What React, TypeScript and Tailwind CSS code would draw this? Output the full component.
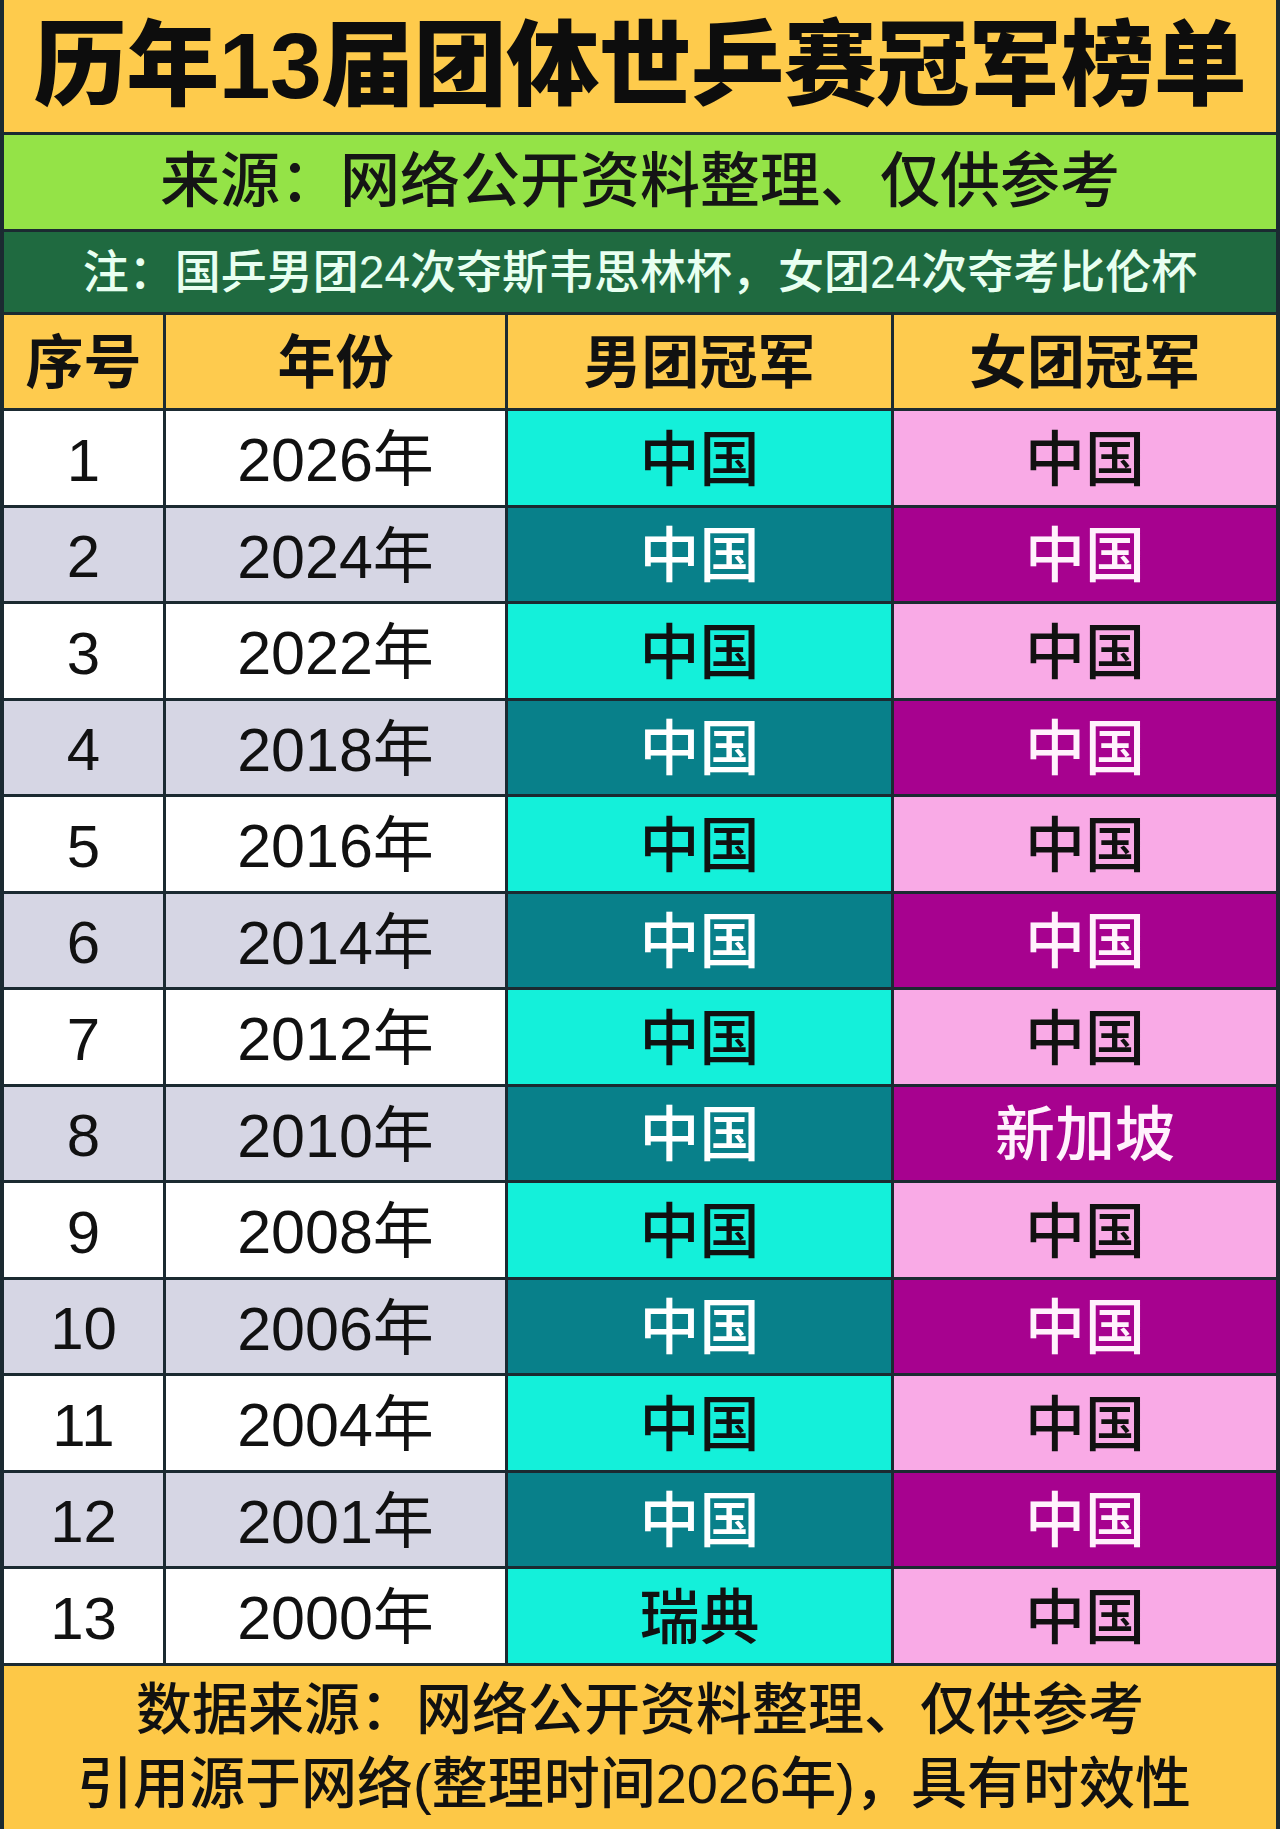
const FONT = "font-['Liberation_Sans','Noto_Sans_CJK_SC',sans-serif]"

type Row = { no: number; year: string; men: string; women: string }

const ROWS: Row[] = [
  { no: 1, year: '2026年', men: '中国', women: '中国' },
  { no: 2, year: '2024年', men: '中国', women: '中国' },
  { no: 3, year: '2022年', men: '中国', women: '中国' },
  { no: 4, year: '2018年', men: '中国', women: '中国' },
  { no: 5, year: '2016年', men: '中国', women: '中国' },
  { no: 6, year: '2014年', men: '中国', women: '中国' },
  { no: 7, year: '2012年', men: '中国', women: '中国' },
  { no: 8, year: '2010年', men: '中国', women: '新加坡' },
  { no: 9, year: '2008年', men: '中国', women: '中国' },
  { no: 10, year: '2006年', men: '中国', women: '中国' },
  { no: 11, year: '2004年', men: '中国', women: '中国' },
  { no: 12, year: '2001年', men: '中国', women: '中国' },
  { no: 13, year: '2000年', men: '瑞典', women: '中国' },
]

const COLS = 'grid grid-cols-[159px_339px_383px_382px] gap-x-[3px]'

export default function App() {
  return (
    <div
      className={`${FONT} w-[1280px] h-[1829px] bg-[#1b2a31] px-[4px] flex flex-col gap-[3px] text-[#111]`}
    >
      {/* Title */}
      <div className="h-[132px] bg-[#fecb4c] flex items-center justify-center">
        <h1 className="text-[93px] leading-none font-black tracking-[-0.5px] text-[#0d0d0d]">
          历年13届团体世乒赛冠军榜单
        </h1>
      </div>

      {/* Source */}
      <div className="h-[94px] bg-[#94e347] flex items-center justify-center">
        <p className="text-[60px] leading-none font-medium text-[#151515]">
          来源：网络公开资料整理、仅供参考
        </p>
      </div>

      {/* Note */}
      <div className="h-[80px] bg-[#1f6a40] flex items-center justify-center">
        <p className="text-[46px] leading-none font-medium text-[#e8fff1]">
          注：国乒男团24次夺斯韦思林杯，女团24次夺考比伦杯
        </p>
      </div>

      {/* Table header */}
      <div className={`${COLS} h-[93px]`}>
        {['序号', '年份', '男团冠军', '女团冠军'].map((h) => (
          <div key={h} className="bg-[#fecb4e] flex items-center justify-center">
            <span className="text-[58px] leading-none font-bold text-[#111] pt-[2px]">{h}</span>
          </div>
        ))}
      </div>

      {/* Rows */}
      {ROWS.map((r, i) => {
        const dark = i % 2 === 1
        return (
          <div key={r.no} className={`${COLS} h-[93.5px]`}>
            <div className={`${dark ? 'bg-[#d6d6e4]' : 'bg-white'} flex items-center justify-center`}>
              <span className="text-[60px] leading-none pt-[6px]">{r.no}</span>
            </div>
            <div className={`${dark ? 'bg-[#d6d6e4]' : 'bg-white'} flex items-center justify-center`}>
              <span className="text-[61px] leading-none pt-[6px]">{r.year}</span>
            </div>
            <div
              className={`${
                dark ? 'bg-[#08808a] text-white' : 'bg-[#14f0da] text-[#111]'
              } flex items-center justify-center`}
            >
              <span className="text-[60px] leading-none font-medium pt-[6px]">{r.men}</span>
            </div>
            <div
              className={`${
                dark ? 'bg-[#a7028f] text-[#fff2fc]' : 'bg-[#f9aae6] text-[#111]'
              } flex items-center justify-center`}
            >
              <span className="text-[60px] leading-none font-medium pt-[6px]">{r.women}</span>
            </div>
          </div>
        )
      })}

      {/* Footer */}
      <div className="flex-1 bg-[#fdc847] flex flex-col items-center justify-center">
        <p className="text-[56px] leading-[74px] font-medium whitespace-nowrap">
          数据来源：网络公开资料整理、仅供参考
        </p>
        <p className="text-[56px] leading-[74px] font-medium whitespace-nowrap pr-[12px]">
          引用源于网络(整理时间2026年)，具有时效性
        </p>
      </div>
    </div>
  )
}
